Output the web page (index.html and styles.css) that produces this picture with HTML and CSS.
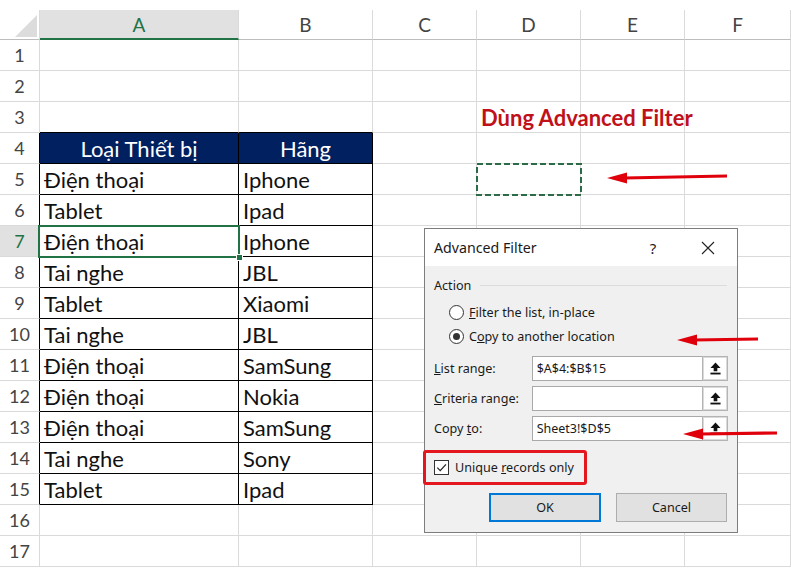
FILE: index.html
```html
<!DOCTYPE html>
<html lang="vi">
<head>
<meta charset="utf-8">
<title>Advanced Filter</title>
<link rel="stylesheet" href="styles.css">
</head>
<body>
<div class="page">
  <div class="sheet">
    <div class="cell corner"><span class="tri"></span></div>
    <div class="cell ch ch-sel">A</div>
    <div class="cell ch">B</div>
    <div class="cell ch">C</div>
    <div class="cell ch">D</div>
    <div class="cell ch">E</div>
    <div class="cell ch">F</div>

    <div class="cell rh">1</div><div class="cell"></div><div class="cell"></div><div class="cell"></div><div class="cell"></div><div class="cell"></div><div class="cell"></div>
    <div class="cell rh">2</div><div class="cell"></div><div class="cell"></div><div class="cell"></div><div class="cell"></div><div class="cell"></div><div class="cell"></div>
    <div class="cell rh">3</div><div class="cell tt"></div><div class="cell tt"></div><div class="cell"></div><div class="cell title-cell"><span class="title">Dùng Advanced Filter</span></div><div class="cell"></div><div class="cell"></div>

    <div class="cell rh tl">4</div><div class="cell t th">Loại Thiết bị</div><div class="cell t th">Hãng</div><div class="cell"></div><div class="cell"></div><div class="cell"></div><div class="cell"></div>
    <div class="cell rh tl">5</div><div class="cell t">Điện thoại</div><div class="cell t">Iphone</div><div class="cell"></div><div class="cell marquee"><svg class="marq" viewBox="0 0 106 33" width="106" height="33"><rect x="1" y="1" width="104" height="31" fill="none" stroke="#2b6b47" stroke-width="2" stroke-dasharray="6 3"/></svg></div><div class="cell"></div><div class="cell"></div>
    <div class="cell rh tl">6</div><div class="cell t">Tablet</div><div class="cell t">Ipad</div><div class="cell"></div><div class="cell"></div><div class="cell"></div><div class="cell"></div>
    <div class="cell rh tl rh-sel">7</div><div class="cell t active">Điện thoại</div><div class="cell t">Iphone</div><div class="cell"></div><div class="cell"></div><div class="cell"></div><div class="cell"></div>
    <div class="cell rh tl">8</div><div class="cell t">Tai nghe</div><div class="cell t">JBL</div><div class="cell"></div><div class="cell"></div><div class="cell"></div><div class="cell"></div>
    <div class="cell rh tl">9</div><div class="cell t">Tablet</div><div class="cell t">Xiaomi</div><div class="cell"></div><div class="cell"></div><div class="cell"></div><div class="cell"></div>
    <div class="cell rh tl">10</div><div class="cell t">Tai nghe</div><div class="cell t">JBL</div><div class="cell"></div><div class="cell"></div><div class="cell"></div><div class="cell"></div>
    <div class="cell rh tl">11</div><div class="cell t">Điện thoại</div><div class="cell t">SamSung</div><div class="cell"></div><div class="cell"></div><div class="cell"></div><div class="cell"></div>
    <div class="cell rh tl">12</div><div class="cell t">Điện thoại</div><div class="cell t">Nokia</div><div class="cell"></div><div class="cell"></div><div class="cell"></div><div class="cell"></div>
    <div class="cell rh tl">13</div><div class="cell t">Điện thoại</div><div class="cell t">SamSung</div><div class="cell"></div><div class="cell"></div><div class="cell"></div><div class="cell"></div>
    <div class="cell rh tl">14</div><div class="cell t">Tai nghe</div><div class="cell t">Sony</div><div class="cell"></div><div class="cell"></div><div class="cell"></div><div class="cell"></div>
    <div class="cell rh tl">15</div><div class="cell t">Tablet</div><div class="cell t">Ipad</div><div class="cell"></div><div class="cell"></div><div class="cell"></div><div class="cell"></div>
    <div class="cell rh">16</div><div class="cell"></div><div class="cell"></div><div class="cell"></div><div class="cell"></div><div class="cell"></div><div class="cell"></div>
    <div class="cell rh">17</div><div class="cell"></div><div class="cell"></div><div class="cell"></div><div class="cell"></div><div class="cell"></div><div class="cell"></div>
  </div>

  <div class="dlg">
    <div class="dlg-title">
      <span class="dlg-name">Advanced Filter</span>
      <span class="dlg-help">?</span>
      <span class="dlg-close"><svg viewBox="0 0 14 14" width="14" height="14"><path d="M1 1 L13 13 M13 1 L1 13" stroke="#222" stroke-width="1.1" fill="none"/></svg></span>
    </div>
    <div class="dlg-body">
      <div class="grp"><span>Action</span><span class="grp-line"></span></div>
      <div class="opt"><span class="radio"></span><span><u>F</u>ilter the list, in-place</span></div>
      <div class="opt"><span class="radio on"></span><span>C<u>o</u>py to another location</span></div>
      <div class="fields">
        <div class="field"><span class="flabel"><u>L</u>ist range:</span><span class="finput">$A$4:$B$15</span><span class="fbtn"><svg viewBox="0 0 12 14" width="11" height="13"><path d="M6 0.5 L11.5 6.5 H8 V10 H4 V6.5 H0.5 Z" fill="#111"/><rect x="0.5" y="11.5" width="11" height="2" fill="#111"/></svg></span></div>
        <div class="field"><span class="flabel"><u>C</u>riteria range:</span><span class="finput"></span><span class="fbtn"><svg viewBox="0 0 12 14" width="11" height="13"><path d="M6 0.5 L11.5 6.5 H8 V10 H4 V6.5 H0.5 Z" fill="#111"/><rect x="0.5" y="11.5" width="11" height="2" fill="#111"/></svg></span></div>
        <div class="field"><span class="flabel">Copy <u>t</u>o:</span><span class="finput">Sheet3!$D$5</span><span class="fbtn"><svg viewBox="0 0 12 14" width="11" height="13"><path d="M6 0.5 L11.5 6.5 H8 V10 H4 V6.5 H0.5 Z" fill="#111"/><rect x="0.5" y="11.5" width="11" height="2" fill="#111"/></svg></span></div>
      </div>
      <div class="check-row"><span class="cbox"><svg viewBox="0 0 14 14" width="13" height="13"><path d="M2.5 7.2 L5.6 10.3 L11.8 3.6" stroke="#222" stroke-width="1.3" fill="none"/></svg></span><span>Unique <u>r</u>ecords only</span></div>
      <div class="btns"><span class="btn btn-ok">OK</span><span class="btn">Cancel</span></div>
    </div>
  </div>

  <svg class="arrows" viewBox="0 0 791 568" width="791" height="568">
    <g fill="#e0000b" stroke="#e0000b">
      <path d="M624 178 L727 176" stroke-width="3.2" fill="none"/>
      <path d="M607 178 L627 172.5 L627 183.5 Z" stroke="none"/>
      <path d="M694 340 L758 339" stroke-width="3.2" fill="none"/>
      <path d="M677 340 L697 334.5 L697 345.5 Z" stroke="none"/>
      <path d="M700 434 L777 433" stroke-width="3.2" fill="none"/>
      <path d="M683 434 L703 428.5 L703 439.5 Z" stroke="none"/>
    </g>
  </svg>
</div>
</body>
</html>
```

FILE: styles.css
```css
html, body {
  margin: 0;
  padding: 0;
  background: #fff;
}
body {
  width: 791px;
  height: 568px;
  overflow: hidden;
}
.page {
  position: relative;
  width: 791px;
  height: 568px;
}
.sheet {
  padding-top: 10px;
  display: grid;
  grid-template-columns: 40px 199px 134px 104px 104px 104px 106px;
  grid-template-rows: 30px repeat(17, 31px);
  font-family: Lato, "Open Sans", sans-serif;
  color: #111;
}
.cell {
  box-sizing: border-box;
  border-right: 1px solid #dadada;
  border-bottom: 1px solid #dadada;
  display: flex;
  align-items: center;
  padding-left: 4px;
  font-size: 22px;
  white-space: nowrap;
}
.corner {
  position: relative;
  padding: 0;
  border-bottom-color: #bdbdbd;
}
.tri {
  position: absolute;
  right: 2px;
  bottom: 2px;
  width: 0;
  height: 0;
  border-left: 22px solid transparent;
  border-bottom: 22px solid #dcdcdc;
}
.ch {
  justify-content: center;
  padding: 0;
  font-size: 19px;
  color: #444;
  border-bottom-color: #bdbdbd;
}
.ch-sel {
  background: #e1e1e1;
  color: #217346;
  border-bottom: 2px solid #217346;
}
.rh {
  justify-content: center;
  padding: 0;
  font-size: 18px;
  color: #444;
}
.rh-sel {
  background: #e1e1e1;
  color: #217346;
}
.tl {
  border-right-color: #000;
}
.tt {
  border-bottom-color: #000;
}
.t {
  border-right-color: #000;
  border-bottom-color: #000;
}
.th {
  background: #002060;
  color: #fff;
  justify-content: center;
  padding: 0;
}
.active {
  position: relative;
}
.active::after {
  content: "";
  position: absolute;
  left: -2px;
  top: -1px;
  right: -2px;
  bottom: -2px;
  border: 2px solid #217346;
}
.active::before {
  content: "";
  position: absolute;
  right: -5px;
  bottom: -5px;
  width: 5px;
  height: 5px;
  background: #217346;
  border: 1px solid #fff;
  z-index: 2;
}
.title-cell {
  overflow: visible;
}
.title {
  font-weight: 700;
  font-size: 22px;
  color: #c0101a;
}
.marquee {
  position: relative;
}
.marq {
  position: absolute;
  left: -1px;
  top: -1px;
}

/* dialog */
.dlg {
  position: absolute;
  left: 424px;
  top: 228px;
  width: 314px;
  height: 305px;
  box-sizing: border-box;
  border: 1px solid #7d7d7d;
  background: #f0f0f0;
  font-family: "Noto Sans", "Open Sans", sans-serif;
  font-size: 12.6px;
  color: #1a1a1a;
  z-index: 5;
  display: flex;
  flex-direction: column;
}
.dlg-title {
  height: 37px;
  background: #fff;
  display: flex;
  align-items: center;
  padding-left: 9px;
}
.dlg-name {
  font-size: 14.2px;
  flex: 1;
}
.dlg-help {
  font-size: 15px;
  width: 20px;
  text-align: center;
  margin-right: 38px;
}
.dlg-close {
  width: 14px;
  height: 14px;
  margin-right: 22px;
  display: flex;
}
.dlg-body {
  flex: 1;
  padding: 9px 9px 0 9px;
  display: flex;
  flex-direction: column;
}
.grp {
  height: 20px;
  display: flex;
  align-items: center;
}
.grp-line {
  flex: 1;
  height: 1px;
  background: #dcdcdc;
  margin-left: 9px;
  margin-right: 1px;
}
.opt {
  height: 24px;
  display: flex;
  align-items: center;
  padding-left: 15px;
}
.grp + .opt {
  margin-top: 5px;
}
.radio {
  box-sizing: border-box;
  width: 15px;
  height: 15px;
  border: 1px solid #333;
  border-radius: 50%;
  background: #fff;
  margin-right: 5px;
  display: flex;
  align-items: center;
  justify-content: center;
}
.radio.on::after {
  content: "";
  width: 7px;
  height: 7px;
  border-radius: 50%;
  background: #333;
}
.fields {
  margin-top: 8px;
  display: flex;
  flex-direction: column;
  gap: 5px;
}
.field {
  height: 25px;
  display: flex;
  align-items: center;
}
.flabel {
  width: 98px;
}
.finput {
  box-sizing: border-box;
  width: 171px;
  height: 25px;
  background: #fff;
  border: 1px solid #a9a9a9;
  border-right: none;
  padding-left: 4px;
  display: flex;
  align-items: center;
  font-size: 12.5px;
}
.fbtn {
  box-sizing: border-box;
  width: 26px;
  height: 25px;
  background: #fff;
  border: 1px solid #b4b4b4;
  box-shadow: inset 0 0 0 1px #dadada;
  display: flex;
  align-items: center;
  justify-content: center;
}
.check-row {
  box-sizing: border-box;
  margin-top: 9px;
  margin-left: -11px;
  width: 164px;
  height: 35px;
  border: 3px solid #e4171f;
  border-radius: 3px;
  display: flex;
  align-items: center;
  padding-left: 8px;
}
.cbox {
  box-sizing: border-box;
  width: 15px;
  height: 15px;
  border: 1px solid #333;
  background: #fff;
  margin-right: 6px;
  display: flex;
  align-items: center;
  justify-content: center;
}
.btns {
  margin-top: 8px;
  display: flex;
  justify-content: flex-end;
  gap: 15px;
  padding-right: 1px;
}
.btn {
  box-sizing: border-box;
  width: 111px;
  height: 29px;
  background: #e1e1e1;
  border: 1px solid #adadad;
  display: flex;
  align-items: center;
  justify-content: center;
}
.btn-ok {
  width: 112px;
  border: 2px solid #0078d7;
}
.arrows {
  position: absolute;
  left: 0;
  top: 0;
  z-index: 10;
  pointer-events: none;
}
```
